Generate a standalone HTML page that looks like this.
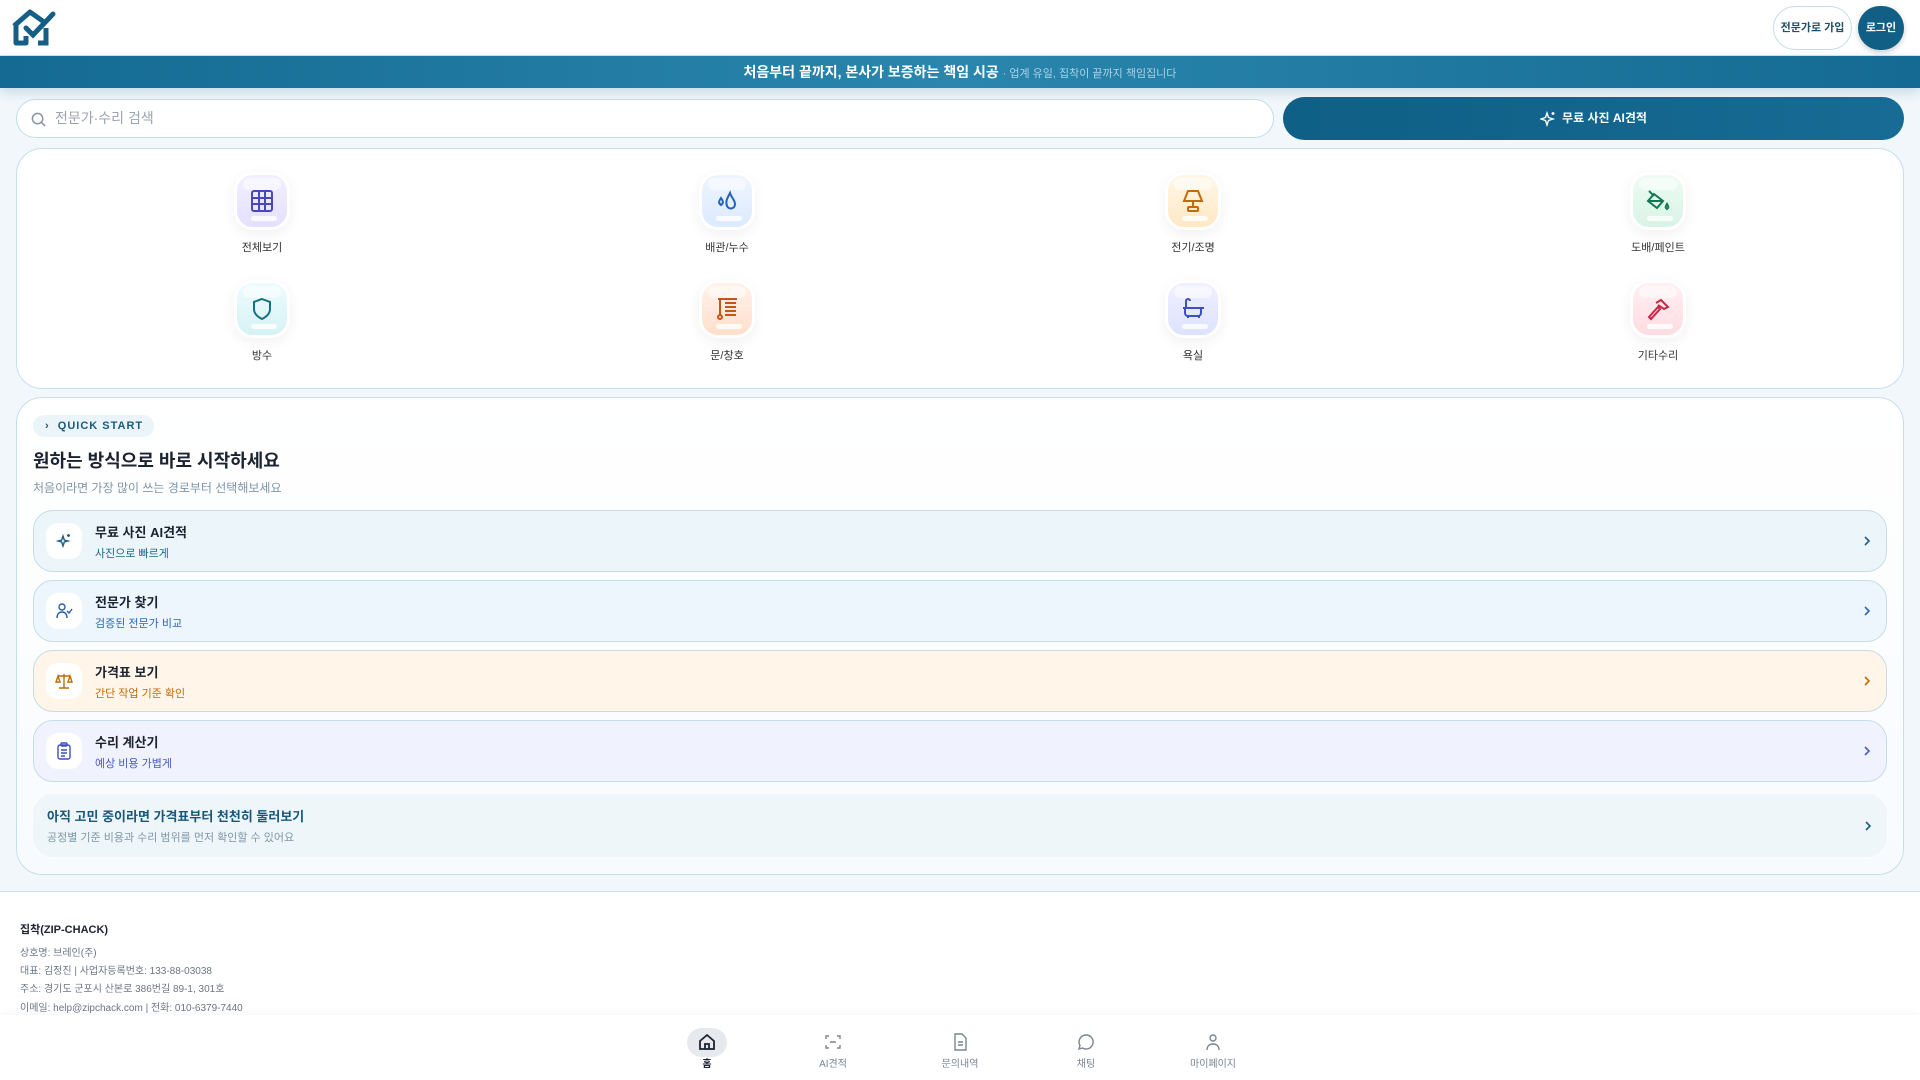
<!DOCTYPE html>
<html><head><meta charset="utf-8"><style>
*{box-sizing:border-box;margin:0;padding:0}
body{width:1920px;height:1080px;overflow:hidden;font-family:"Liberation Sans","Noto Sans CJK KR",sans-serif;background:#f1f7fb;position:relative;color:#1b2230}
.abs{position:absolute}
header{position:absolute;left:0;top:0;width:1920px;height:56px;background:#fff;border-bottom:1px solid #d6e6ef}
.banner{position:absolute;left:0;top:56px;width:1920px;height:32px;background:linear-gradient(90deg,#146a92,#2a86ad 50%,#146a92);color:#fff;text-align:center;font-size:14px;line-height:32px;font-weight:bold;box-shadow:0 4px 12px rgba(20,100,140,.2)}
.banner span{font-weight:normal;font-size:11px;color:#a8d2e6}
.search{left:16px;top:99px;width:1258px;height:39px;background:#fff;border:1px solid #c3dceb;border-radius:20px;font-size:14px;color:#9aa5b1;line-height:37px;padding-left:38px}
.aibtn{left:1283px;top:97px;width:621px;height:43px;background:linear-gradient(90deg,#0f5f86,#176b94);border-radius:22px;color:#fff;font-size:12px;font-weight:bold;text-align:center;line-height:43px}
.card{background:#fff;border:1px solid #c6dfec;border-radius:24px}
.cat{position:absolute;width:120px;text-align:center;font-size:11px;color:#333}
.cat .ic{width:56px;height:58px;margin:0 auto;border-radius:19px;border:3px solid #fff;box-shadow:0 4px 14px rgba(0,0,0,.06);position:relative;display:flex;align-items:center;justify-content:center}
.cat .ic:after{content:"";position:absolute;bottom:6px;left:14px;width:26px;height:5px;border-radius:3px;background:rgba(255,255,255,.8)}
.cat .ic:before{content:"";position:absolute;top:3px;left:6px;width:38px;height:12px;border-radius:8px;background:rgba(255,255,255,.5)}
.cat div.l{margin-top:9px}
.row{position:absolute;left:33px;width:1854px;height:62px;border:1px solid #c5dde9;border-radius:20px}
.row .i{position:absolute;left:12px;top:12px;width:36px;height:36px;background:#fff;border-radius:12px;display:flex;align-items:center;justify-content:center}
.row .t{position:absolute;left:61px;top:11px;font-size:13px;font-weight:bold;color:#1b2230}
.row .s{position:absolute;left:61px;top:34px;font-size:11px}
.row .c{position:absolute;right:14px;top:22px}
.foot{font-size:10px;color:#6b7685;left:20px}
.nav{position:absolute;top:1015px;left:0;width:1920px;height:65px;background:#fff;box-shadow:0 -2px 8px rgba(0,0,0,.04)}
.ni{position:absolute;width:80px;text-align:center;font-size:10px;color:#7a8591;top:18px}
.ni svg{display:block;margin:0 auto 4px}
</style></head><body>
<header>
<svg class="abs" style="left:10px;top:8px" width="48" height="38" viewBox="0 0 48 38"><path d="M4 18 L20 4 L34 14 M6 17 V35 H16 V28" fill="none" stroke="#155f86" stroke-width="5" stroke-linejoin="round"/><path d="M16 20 L23 27 L43 6" fill="none" stroke="#155f86" stroke-width="5" stroke-linecap="round"/><path d="M36 20 V35 H28" fill="none" stroke="#155f86" stroke-width="5"/></svg>
<div class="abs" style="left:1773px;top:6px;width:79px;height:44px;border:1px solid #c4dde9;border-radius:22px;font-size:11px;font-weight:bold;color:#1f4f6b;text-align:center;line-height:42px">전문가로 가입</div>
<div class="abs" style="left:1858px;top:6px;width:46px;height:44px;background:#125f86;border-radius:23px;font-size:11px;font-weight:bold;color:#fff;text-align:center;line-height:44px;box-shadow:0 2px 6px rgba(0,0,0,.2)">로그인</div>
</header>
<div class="banner">처음부터 끝까지, 본사가 보증하는 책임 시공 <span>· 업계 유일, 집착이 끝까지 책임집니다</span></div>
<div class="abs search"><svg class="abs" style="left:14px;top:12px" width="15" height="15" viewBox="0 0 16 16"><circle cx="7" cy="7" r="5.5" fill="none" stroke="#8a96a3" stroke-width="1.6"/><path d="M11 11l4 4" stroke="#8a96a3" stroke-width="1.6"/></svg>전문가·수리 검색</div>
<div class="abs aibtn"><svg style="vertical-align:middle;margin-right:6px" width="16" height="16" viewBox="0 0 16 16" fill="none" stroke="#fff" stroke-width="1.4"><path d="M7 2 L8.5 6.5 L13 8 L8.5 9.5 L7 14 L5.5 9.5 L1 8 L5.5 6.5Z"/><path d="M13 1v3M11.5 2.5h3"/></svg>무료 사진 AI견적</div>

<div class="abs card" style="left:16px;top:148px;width:1888px;height:241px;border-radius:26px"></div>
<div class="cat" style="left:202px;top:172px"><div class="ic" style="background:linear-gradient(#f2efff,#e4e0ff)"><svg width="22" height="22" viewBox="0 0 22 22" fill="none" stroke="#4a47b8" stroke-width="2"><rect x="1" y="1" width="20" height="20" rx="2"/><path d="M8 1v20M14 1v20M1 8h20M1 14h20"/></svg></div><div class="l">전체보기</div></div>
<div class="cat" style="left:667px;top:172px"><div class="ic" style="background:linear-gradient(#eef5ff,#dceaff)"><svg width="24" height="24" viewBox="0 0 24 24" fill="none" stroke="#2461b8" stroke-width="2"><path d="M6 9 C4 12 3 14 6 16 C9 14 8 12 6 9Z"/><path d="M15 4 C13 8 10 12 12 17 C14 21 20 20 20 15 C20 11 16 8 15 4Z"/></svg></div><div class="l">배관/누수</div></div>
<div class="cat" style="left:1133px;top:172px"><div class="ic" style="background:linear-gradient(#fff7e8,#ffe8c4)"><svg width="22" height="24" viewBox="0 0 22 24" fill="none" stroke="#c06a0a" stroke-width="2"><path d="M6 2h10l4 10H2Z"/><path d="M11 12v6"/><rect x="6" y="18" width="10" height="4" rx="1"/></svg></div><div class="l">전기/조명</div></div>
<div class="cat" style="left:1598px;top:172px"><div class="ic" style="background:linear-gradient(#eefbf4,#d8f4e5)"><svg width="26" height="24" viewBox="0 0 26 24" fill="none" stroke="#127a4e" stroke-width="2"><path d="M4 2l5 5"/><path d="M9 5 L18 12 L12 19 L3 12Z"/><path d="M3 12h15"/><path d="M22 15c-1.5 2.5-2 3.5 0 5c2-1.5 1.5-2.5 0-5Z"/></svg></div><div class="l">도배/페인트</div></div>
<div class="cat" style="left:202px;top:280px"><div class="ic" style="background:linear-gradient(#eefbfd,#d6f2f6)"><svg width="20" height="24" viewBox="0 0 20 24" fill="none" stroke="#17707f" stroke-width="2"><path d="M10 2 L18 5 V12 C18 17 14 20 10 22 C6 20 2 17 2 12 V5Z"/></svg></div><div class="l">방수</div></div>
<div class="cat" style="left:667px;top:280px"><div class="ic" style="background:linear-gradient(#fff2ea,#ffdfcc)"><svg width="22" height="24" viewBox="0 0 22 24" fill="none" stroke="#c4561c" stroke-width="2"><path d="M2 2h19M4 2v16M9 6h11M9 10h11M9 14h11M9 18h11"/><circle cx="4" cy="20" r="2"/></svg></div><div class="l">문/창호</div></div>
<div class="cat" style="left:1133px;top:280px"><div class="ic" style="background:linear-gradient(#eff1ff,#dde2ff)"><svg width="24" height="24" viewBox="0 0 24 24" fill="none" stroke="#3d4fc0" stroke-width="2"><path d="M5 11V4a2 2 0 0 1 4 0"/><path d="M2 11h21M4 11v5a3 3 0 0 0 3 3h10a3 3 0 0 0 3-3v-5M7 19v2M18 19v2"/></svg></div><div class="l">욕실</div></div>
<div class="cat" style="left:1598px;top:280px"><div class="ic" style="background:linear-gradient(#fff0f2,#ffdce2)"><svg width="24" height="24" viewBox="0 0 24 24" fill="none" stroke="#c42a48" stroke-width="2"><path d="M3 20 L12 10 L14 12 L5 22Z"/><path d="M10 6 L15 3 L22 10 L18 12 L12 8"/></svg></div><div class="l">기타수리</div></div>

<div class="abs card" style="left:16px;top:397px;width:1888px;height:478px;border-radius:26px;background:linear-gradient(180deg,#fff,#f7fbfd)"></div>
<div class="abs" style="left:33px;top:415px;width:121px;height:22px;background:#eaf4f9;border-radius:11px;font-size:11px;font-weight:bold;letter-spacing:1px;color:#1a5a7a;line-height:22px;padding-left:12px">›&nbsp;&nbsp;QUICK START</div>
<div class="abs" style="left:33px;top:447px;font-size:18px;font-weight:bold;color:#1b2230">원하는 방식으로 바로 시작하세요</div>
<div class="abs" style="left:33px;top:479px;font-size:12px;color:#7e96a6">처음이라면 가장 많이 쓰는 경로부터 선택해보세요</div>

<div class="row" style="top:510px;background:#ecf5fa"><div class="i"><svg width="16" height="16" viewBox="0 0 16 16" fill="none" stroke="#1e5f80" stroke-width="1.4"><path d="M7 3 L8.3 7 L12 8 L8.3 9 L7 13 L5.7 9 L2 8 L5.7 7Z"/><path d="M12.5 1v3M11 2.5h3"/></svg></div><div class="t">무료 사진 AI견적</div><div class="s" style="color:#1e6586">사진으로 빠르게</div><svg class="c" width="10" height="16" viewBox="0 0 10 16"><path d="M3 4l4 4-4 4" fill="none" stroke="#1e5f80" stroke-width="1.6"/></svg></div>
<div class="row" style="top:580px;background:#edf5fd"><div class="i"><svg width="18" height="18" viewBox="0 0 18 18" fill="none" stroke="#2a5fa8" stroke-width="1.4"><circle cx="7" cy="5" r="3"/><path d="M2 16c0-4 2-6 5-6s5 2 5 6"/><path d="M12 9l2 2 3-4"/></svg></div><div class="t">전문가 찾기</div><div class="s" style="color:#2d68b5">검증된 전문가 비교</div><svg class="c" width="10" height="16" viewBox="0 0 10 16"><path d="M3 4l4 4-4 4" fill="none" stroke="#2d68b5" stroke-width="1.6"/></svg></div>
<div class="row" style="top:650px;background:#fff6e9"><div class="i"><svg width="18" height="18" viewBox="0 0 18 18" fill="none" stroke="#c06a0a" stroke-width="1.4"><path d="M9 2v14M4 16h10M3 4h12M3 4l-2 6h4zM15 4l-2 6h4z"/></svg></div><div class="t">가격표 보기</div><div class="s" style="color:#c06a0a">간단 작업 기준 확인</div><svg class="c" width="10" height="16" viewBox="0 0 10 16"><path d="M3 4l4 4-4 4" fill="none" stroke="#c06a0a" stroke-width="1.6"/></svg></div>
<div class="row" style="top:720px;background:#f0f2fe"><div class="i"><svg width="16" height="18" viewBox="0 0 16 18" fill="none" stroke="#3d4fc0" stroke-width="1.4"><rect x="2" y="3" width="12" height="14" rx="2"/><rect x="5" y="1" width="6" height="3" rx="1"/><path d="M5 8h6M5 11h6M5 14h4"/></svg></div><div class="t">수리 계산기</div><div class="s" style="color:#4a5bc4">예상 비용 가볍게</div><svg class="c" width="10" height="16" viewBox="0 0 10 16"><path d="M3 4l4 4-4 4" fill="none" stroke="#4a5bc4" stroke-width="1.6"/></svg></div>
<div class="abs" style="left:33px;top:794px;width:1854px;height:63px;background:#eff6fa;border-radius:20px">
<div class="abs" style="left:14px;top:12px;font-size:13px;font-weight:bold;color:#17587a">아직 고민 중이라면 가격표부터 천천히 둘러보기</div>
<div class="abs" style="left:14px;top:35px;font-size:11px;color:#7e96a6">공정별 기준 비용과 수리 범위를 먼저 확인할 수 있어요</div>
<svg class="abs" style="right:14px;top:24px" width="10" height="16" viewBox="0 0 10 16"><path d="M3 4l4 4-4 4" fill="none" stroke="#1e5f80" stroke-width="1.6"/></svg></div>

<div class="abs" style="left:0;top:891px;width:1920px;height:189px;background:#fff;border-top:1px solid #cfe2ec"></div>
<div class="abs" style="left:20px;top:921px;font-size:11px;font-weight:bold;color:#1b2230">집착(ZIP-CHACK)</div>
<div class="abs foot" style="top:944px">상호명: 브레인(주)</div>
<div class="abs foot" style="top:962px">대표: 김정진 | 사업자등록번호: 133-88-03038</div>
<div class="abs foot" style="top:980px">주소: 경기도 군포시 산본로 386번길 89-1, 301호</div>
<div class="abs foot" style="top:999px">이메일: help@zipchack.com | 전화: 010-6379-7440</div>
<div class="nav">
<div class="abs" style="left:687px;top:13px;width:40px;height:29px;background:#e6e9ee;border-radius:15px"></div>
<div class="ni" style="left:667px;color:#1b2230;font-weight:bold"><svg width="18" height="18" viewBox="0 0 18 18" fill="none" stroke="#1b2230" stroke-width="1.8"><path d="M2 8L9 2l7 6v8H2Z"/><path d="M7 16v-5h4v5"/></svg>홈</div>
<div class="ni" style="left:793px"><svg width="18" height="18" viewBox="0 0 18 18" fill="none" stroke="#7a8591" stroke-width="1.4"><path d="M2 6V3h3M13 3h3v3M16 12v3h-3M5 15H2v-3M6 9h6"/></svg>AI견적</div>
<div class="ni" style="left:920px"><svg width="18" height="18" viewBox="0 0 18 18" fill="none" stroke="#7a8591" stroke-width="1.4"><path d="M4 1h7l4 4v12H4Z"/><path d="M7 9h5M7 12h5"/></svg>문의내역</div>
<div class="ni" style="left:1046px"><svg width="18" height="18" viewBox="0 0 18 18" fill="none" stroke="#7a8591" stroke-width="1.4"><path d="M9 2a7 7 0 1 1-3.5 13L2 16l1-3.5A7 7 0 0 1 9 2Z"/></svg>채팅</div>
<div class="ni" style="left:1173px"><svg width="18" height="18" viewBox="0 0 18 18" fill="none" stroke="#7a8591" stroke-width="1.4"><circle cx="9" cy="5" r="3"/><path d="M3 17c0-4 2.5-6 6-6s6 2 6 6"/></svg>마이페이지</div>
</div>
</body></html>
